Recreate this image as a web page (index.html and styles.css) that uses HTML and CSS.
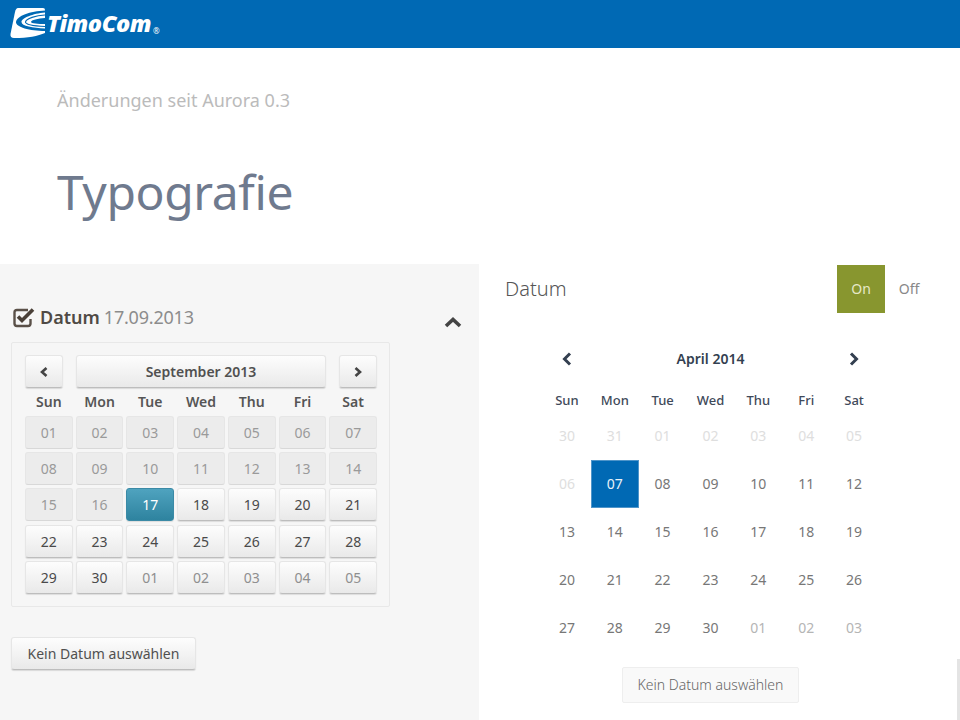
FILE: index.html
```html
<!DOCTYPE html>
<html lang="de">
<head>
  <meta charset="UTF-8">
  <title>Typografie</title>
  <link rel="stylesheet" href="styles.css">
</head>
<body>

  <header class="topbar">
    <svg class="logo-mark" width="35" height="30" viewBox="0 0 35 30">
      <path d="M8 0 H33 Q35 0 35 2 V25 C28 28 18 30 4 30 Q0 30 0.500 26 L5 4 Q6 0 8 0 Z" fill="#fff"/>
      <path d="M35 2.500 C20 3 7 8 6 14 C5.500 19 20 23 35 23 V20.500 C23 20 11.500 18 11.500 14 C11.500 10 23 5.500 35 4.500 Z" fill="#0069b4"/>
      <path d="M35 7 C26 7.500 16 10.500 15.500 14 C15.500 16.500 25 18 35 18.500" fill="none" stroke="#0069b4" stroke-width="1.200"/>
      <path d="M35 10 C28 10.500 21 12 21 14 C21 15.500 28 16 35 16 Z" fill="#0069b4"/>
    </svg>
    <span class="logo-text">TimoCom</span><span class="logo-reg">®</span>
  </header>

  <section class="intro">
    <p class="intro-lead">Änderungen seit Aurora 0.3</p>
    <h1 class="intro-title">Typografie</h1>
  </section>

  <main class="compare">
    <section class="old">
      <div class="old-head">
        <svg class="old-check" width="23" height="21" viewBox="0 0 23 21">
          <path d="M15 3 H4 Q1.500 3 1.500 5.500 V16.500 Q1.500 19 4 19 H15 Q17.500 19 17.500 16.500 V12" fill="none" stroke="#5a5048" stroke-width="2.400"/>
          <path d="M5 9.500 L9 13.500 L20 2.500" fill="none" stroke="#4a4038" stroke-width="3.600"/>
        </svg>
        <strong class="old-label">Datum</strong>
        <span class="old-date">17.09.2013</span>
        <svg class="old-toggle" width="18" height="12" viewBox="0 0 18 12">
          <path d="M2 10 L9 3.500 L16 10" fill="none" stroke="#444" stroke-width="3.600"/>
        </svg>
      </div>

      <div class="old-cal">
        <div class="old-nav">
          <button class="old-btn old-arrow"><svg width="10" height="12" viewBox="0 0 10 12"><path d="M7.500 2 L3 6 L7.500 10" fill="none" stroke="#444" stroke-width="2.600"/></svg></button>
          <button class="old-btn old-month">September 2013</button>
          <button class="old-btn old-arrow"><svg width="10" height="12" viewBox="0 0 10 12"><path d="M2.500 2 L7 6 L2.500 10" fill="none" stroke="#444" stroke-width="2.600"/></svg></button>
        </div>
        <div class="old-grid">
          <b>Sun</b><b>Mon</b><b>Tue</b><b>Wed</b><b>Thu</b><b>Fri</b><b>Sat</b>
          <span class="off">01</span><span class="off">02</span><span class="off">03</span><span class="off">04</span><span class="off">05</span><span class="off">06</span><span class="off">07</span>
          <span class="off">08</span><span class="off">09</span><span class="off">10</span><span class="off">11</span><span class="off">12</span><span class="off">13</span><span class="off">14</span>
          <span class="off">15</span><span class="off">16</span><span class="sel">17</span><span>18</span><span>19</span><span>20</span><span>21</span>
          <span>22</span><span>23</span><span>24</span><span>25</span><span>26</span><span>27</span><span>28</span>
          <span>29</span><span>30</span><span class="next">01</span><span class="next">02</span><span class="next">03</span><span class="next">04</span><span class="next">05</span>
        </div>
      </div>

      <button class="old-btn old-clear">Kein Datum auswählen</button>
    </section>

    <section class="new">
      <div class="new-head">
        <h2 class="new-label">Datum</h2>
        <div class="switch">
          <span class="switch-on">On</span>
          <span class="switch-off">Off</span>
        </div>
      </div>

      <div class="new-cal">
        <div class="new-nav">
          <svg width="14" height="16" viewBox="0 0 14 16"><path d="M10 2.500 L4.500 8 L10 13.500" fill="none" stroke="#333f50" stroke-width="3"/></svg>
          <strong>April 2014</strong>
          <svg width="14" height="16" viewBox="0 0 14 16"><path d="M4 2.500 L9.500 8 L4 13.500" fill="none" stroke="#333f50" stroke-width="3"/></svg>
        </div>
        <div class="new-week">
          <b>Sun</b><b>Mon</b><b>Tue</b><b>Wed</b><b>Thu</b><b>Fri</b><b>Sat</b>
        </div>
        <div class="new-grid">
          <span class="faint">30</span><span class="faint">31</span><span class="faint">01</span><span class="faint">02</span><span class="faint">03</span><span class="faint">04</span><span class="faint">05</span>
          <span class="faint">06</span><span class="sel">07</span><span>08</span><span>09</span><span>10</span><span>11</span><span>12</span>
          <span>13</span><span>14</span><span>15</span><span>16</span><span>17</span><span>18</span><span>19</span>
          <span>20</span><span>21</span><span>22</span><span>23</span><span>24</span><span>25</span><span>26</span>
          <span>27</span><span>28</span><span>29</span><span>30</span><span class="after">01</span><span class="after">02</span><span class="after">03</span>
        </div>
      </div>

      <button class="new-clear">Kein Datum auswählen</button>
    </section>
  </main>

  <div class="scroll-thumb"></div>

</body>
</html>
```

FILE: styles.css
```css
html, body {
  height: 720px;
  overflow: hidden;
}

body {
  margin: 0;
  font-family: "Noto Sans", "Open Sans", sans-serif;
  background: #fff;
  color: #444;
}

button {
  font-family: inherit;
  cursor: pointer;
}

.topbar {
  display: flex;
  align-items: center;
  height: 48px;
  padding-left: 10px;
  background: #0069b4;
  color: #fff;
}

.logo-mark {
  margin-top: -2px;
}

.logo-text {
  margin: -3px 0 0 2px;
  font-family: "Open Sans", sans-serif;
  font-size: 23.500px;
  font-weight: 800;
  font-style: italic;
  letter-spacing: -0.5px;
}

.logo-reg {
  align-self: flex-end;
  margin: 0 0 12px 2px;
  font-size: 8px;
}

.intro {
  height: 216px;
  padding-left: 57px;
  box-sizing: border-box;
  overflow: hidden;
}

.intro-lead {
  margin: 39px 0 0;
  font-size: 18px;
  line-height: 26px;
  color: #bbb;
}

.intro-title {
  margin: 49px 0 0;
  font-size: 48px;
  line-height: 60px;
  font-weight: 400;
  letter-spacing: -0.4px;
  color: #6f7a8e;
}

.compare {
  display: flex;
  height: 456px;
}

.old {
  width: 479px;
  flex: none;
  box-sizing: border-box;
  padding: 40px 0 0 11px;
  background: #f6f6f6;
}

.old-head {
  display: flex;
  align-items: center;
  gap: 4px;
  height: 26px;
  padding-left: 2px;
  font-size: 18px;
}

.old-label {
  font-weight: 600;
  color: #4f4a45;
}

.old-date {
  letter-spacing: -0.2px;
  color: #8c8c8c;
}

.old-toggle {
  margin: 10px 17px 0 auto;
}

.old-cal {
  width: 379px;
  box-sizing: border-box;
  margin-top: 12px;
  padding: 12px 12px 0 13px;
  height: 265px;
  border: 1px solid #e8e8e8;
  border-radius: 2px;
}

.old-nav {
  display: flex;
  gap: 13px;
  height: 33px;
}

.old-btn {
  padding: 0;
  border: 1px solid #e6e6e6;
  border-bottom-color: #bdbdbd;
  border-radius: 3px;
  background: linear-gradient(#fdfdfd, #e9e9e9);
  box-shadow: 0 1px 1px rgba(0, 0, 0, 0.12);
  color: #505050;
}

.old-arrow {
  display: flex;
  align-items: center;
  justify-content: center;
  width: 38px;
}

.old-month {
  flex: 1;
  font-size: 14px;
  font-weight: 600;
}

.old-grid {
  display: grid;
  grid-template-columns: repeat(7, 1fr);
  grid-template-rows: 24.500px repeat(5, 33px);
  column-gap: 3px;
  row-gap: 3.300px;
  width: 352px;
  font-size: 14px;
}

.old-grid b {
  height: 24px;
  line-height: 27px;
  text-align: center;
  font-weight: 600;
  color: #555;
}

.old-grid span {
  display: flex;
  align-items: center;
  justify-content: center;
  box-sizing: border-box;
  border: 1px solid #e6e6e6;
  border-bottom-color: #bdbdbd;
  border-radius: 3px;
  background: linear-gradient(#fdfdfd, #e9e9e9);
  box-shadow: 0 1px 1px rgba(0, 0, 0, 0.1);
  color: #4a4a4a;
}

.old-grid .off {
  border-color: #e6e6e6;
  border-bottom-color: #d8d8d8;
  background: #ececec;
  box-shadow: none;
  color: #9a9a9a;
}

.old-grid .next {
  color: #8f8f8f;
}

.old-grid .sel {
  border-color: #3b8aa6;
  background: linear-gradient(#4fa3bf, #2e839f);
  color: #fff;
}

.old-clear {
  display: block;
  width: 185px;
  height: 33px;
  margin-top: 30px;
  font-size: 14px;
}

.new {
  flex: 1;
  background: #fff;
}

.new-head {
  display: flex;
  align-items: flex-start;
  justify-content: space-between;
  height: 49px;
  padding: 1px 27px 0 26px;
}

.new-label {
  margin: 10px 0 0;
  font-size: 20px;
  line-height: 28px;
  font-weight: 300;
  color: #555;
}

.switch {
  display: flex;
  font-size: 14px;
}

.switch span {
  display: flex;
  align-items: center;
  justify-content: center;
  box-sizing: border-box;
  width: 48px;
  height: 48px;
  padding-bottom: 2px;
}

.switch-on {
  background: #88962f;
  color: #e6e9c8;
}

.switch-off {
  color: #888;
}

.new-cal {
  width: 335px;
  margin: 0 0 0 64px;
  color: #777;
}

.new-nav {
  display: flex;
  align-items: center;
  justify-content: space-between;
  height: 20px;
  margin-top: 34px;
  padding: 0 17px;
  font-size: 14px;
  color: #333f50;
}

.new-nav strong {
  font-weight: 600;
}

.new-nav svg {
  margin-top: 2px;
}

.new-week {
  display: grid;
  grid-template-columns: repeat(7, 1fr);
  height: 20px;
  margin-top: 22px;
  font-size: 13px;
  line-height: 20px;
  text-align: center;
  color: #3f4a5a;
}

.new-week b {
  font-weight: 500;
}

.new-grid {
  display: grid;
  grid-template-columns: repeat(7, 1fr);
  grid-auto-rows: 47.800px;
  margin-top: 2px;
  font-size: 14px;
}

.new-grid span {
  display: flex;
  align-items: center;
  justify-content: center;
}

.new-grid .faint {
  color: #dedede;
}

.new-grid .after {
  color: #b5b5b5;
}

.new-grid .sel {
  background: #0069b4;
  box-shadow: inset 0 0 0 1px #4f95ca;
  color: #e8f2f9;
}

.new-clear {
  display: block;
  width: 177px;
  height: 36px;
  margin: 16px 0 0 143px;
  padding: 0;
  border: 1px solid #eee;
  border-radius: 2px;
  background: #f9f9f9;
  font-size: 14px;
  font-weight: 300;
  color: #666;
}

.scroll-thumb {
  position: absolute;
  top: 659px;
  right: 0;
  width: 3px;
  height: 61px;
  background: #e4e4e4;
}
```
